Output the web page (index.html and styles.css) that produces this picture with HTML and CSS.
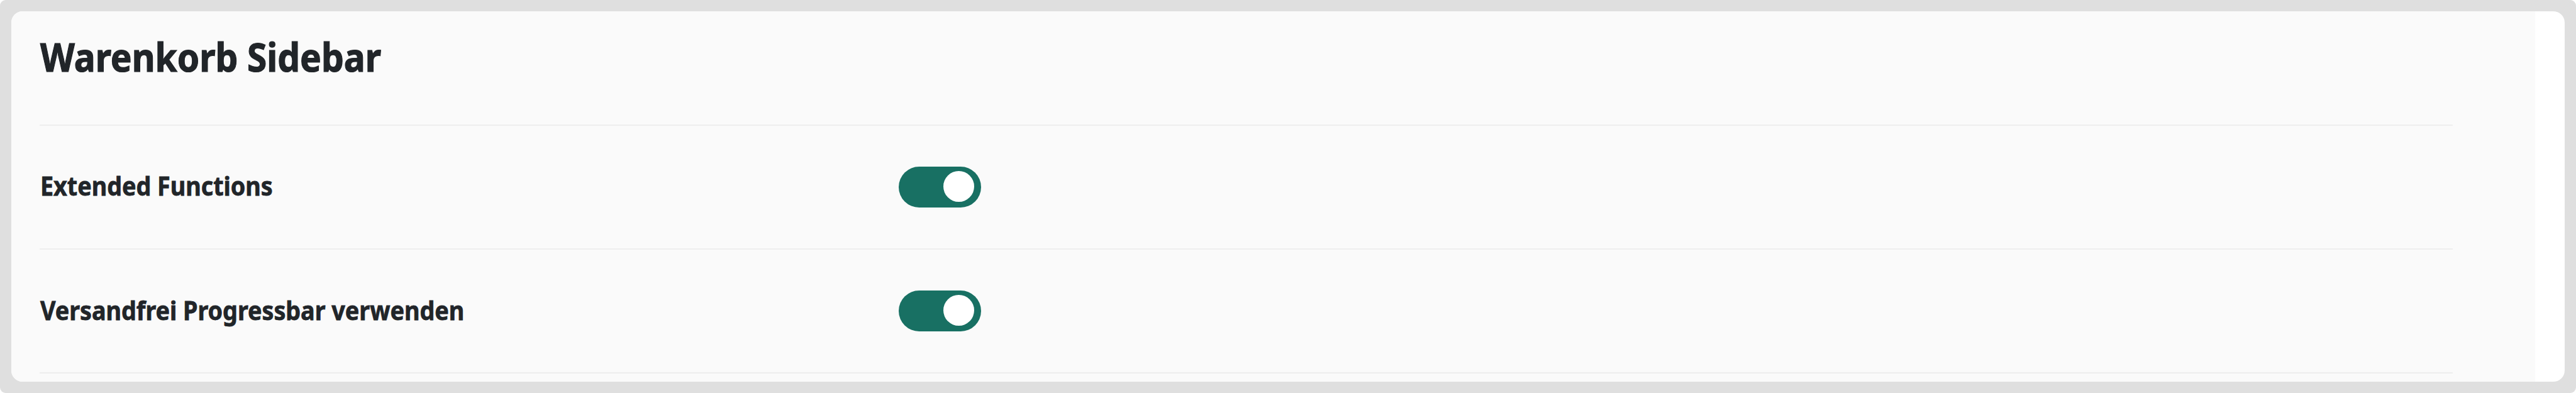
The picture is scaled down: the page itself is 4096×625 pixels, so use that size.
FILE: index.html
```
<!DOCTYPE html>
<html lang="de">
<head>
	<meta charset="UTF-8">
	<title>Warenkorb Sidebar</title>
	<link rel="stylesheet" href="styles.css">
</head>
<body>
<div class="frame">
	<div class="content">
		<div class="panel">
			<h1 class="title"><span class="title-text">Warenkorb Sidebar</span></h1>
			<div class="row">
				<div class="label"><span class="label-text">Extended Functions</span></div>
				<div class="switch"><span class="knob"></span></div>
			</div>
			<div class="row">
				<div class="label"><span class="label-text">Versandfrei Progressbar verwenden</span></div>
				<div class="switch"><span class="knob"></span></div>
			</div>
			<div class="row"></div>
		</div>
	</div>
</div>
</body>
</html>
```
FILE: styles.css
```
* {
    margin: 0;
    padding: 0;
    box-sizing: border-box;
}

body {
    background-color: #fff;
    color: #212529;
    font-family: "Noto Sans", "Open Sans", sans-serif;
}

/* outer grey frame */
.frame {
    width: 4096px;
    height: 625px;
    padding: 18px;
    border-radius: 9px;
    background-color: #dfdfdf;
}

.content {
    height: 589px;
    border-radius: 18px;
    background-color: #fff;
    overflow: hidden;
}

.panel {
    width: 4013px;
    height: 589px;
    padding: 0 131px 0 45px;
    background-color: #fafafa;
    overflow: hidden;
}

.title {
    height: 179.6px;
    padding-top: 30px;
    font-size: 63px;
    line-height: 84px;
    font-weight: 700;
}

/* slightly condensed, heavier lettering */
.title-text,
.label-text {
    display: inline-block;
    margin-left: 1px;
    white-space: nowrap;
    transform: scaleX(0.9);
    transform-origin: left center;
    -webkit-text-stroke: 1.2px #212529;
}

.label-text {
    transform: scaleX(0.897);
    -webkit-text-stroke-width: 0.8px;
}

.row {
    display: flex;
    align-items: center;
    height: 197.4px;
    border-top: 2px solid #eee;
}

.label {
    width: 1366.3px;
    padding-bottom: 4px;
    font-size: 42px;
    line-height: 58px;
    font-weight: 700;
}

/* toggle */
.switch {
    display: flex;
    width: 130.4px;
    height: 65.2px;
    padding: 7.2px 10.9px 0 0;
    justify-content: flex-end;
    border-radius: 33px;
    background-color: #187063;
}

.knob {
    width: 48.9px;
    height: 48.9px;
    border-radius: 50%;
    background-color: #fff;
}
```
